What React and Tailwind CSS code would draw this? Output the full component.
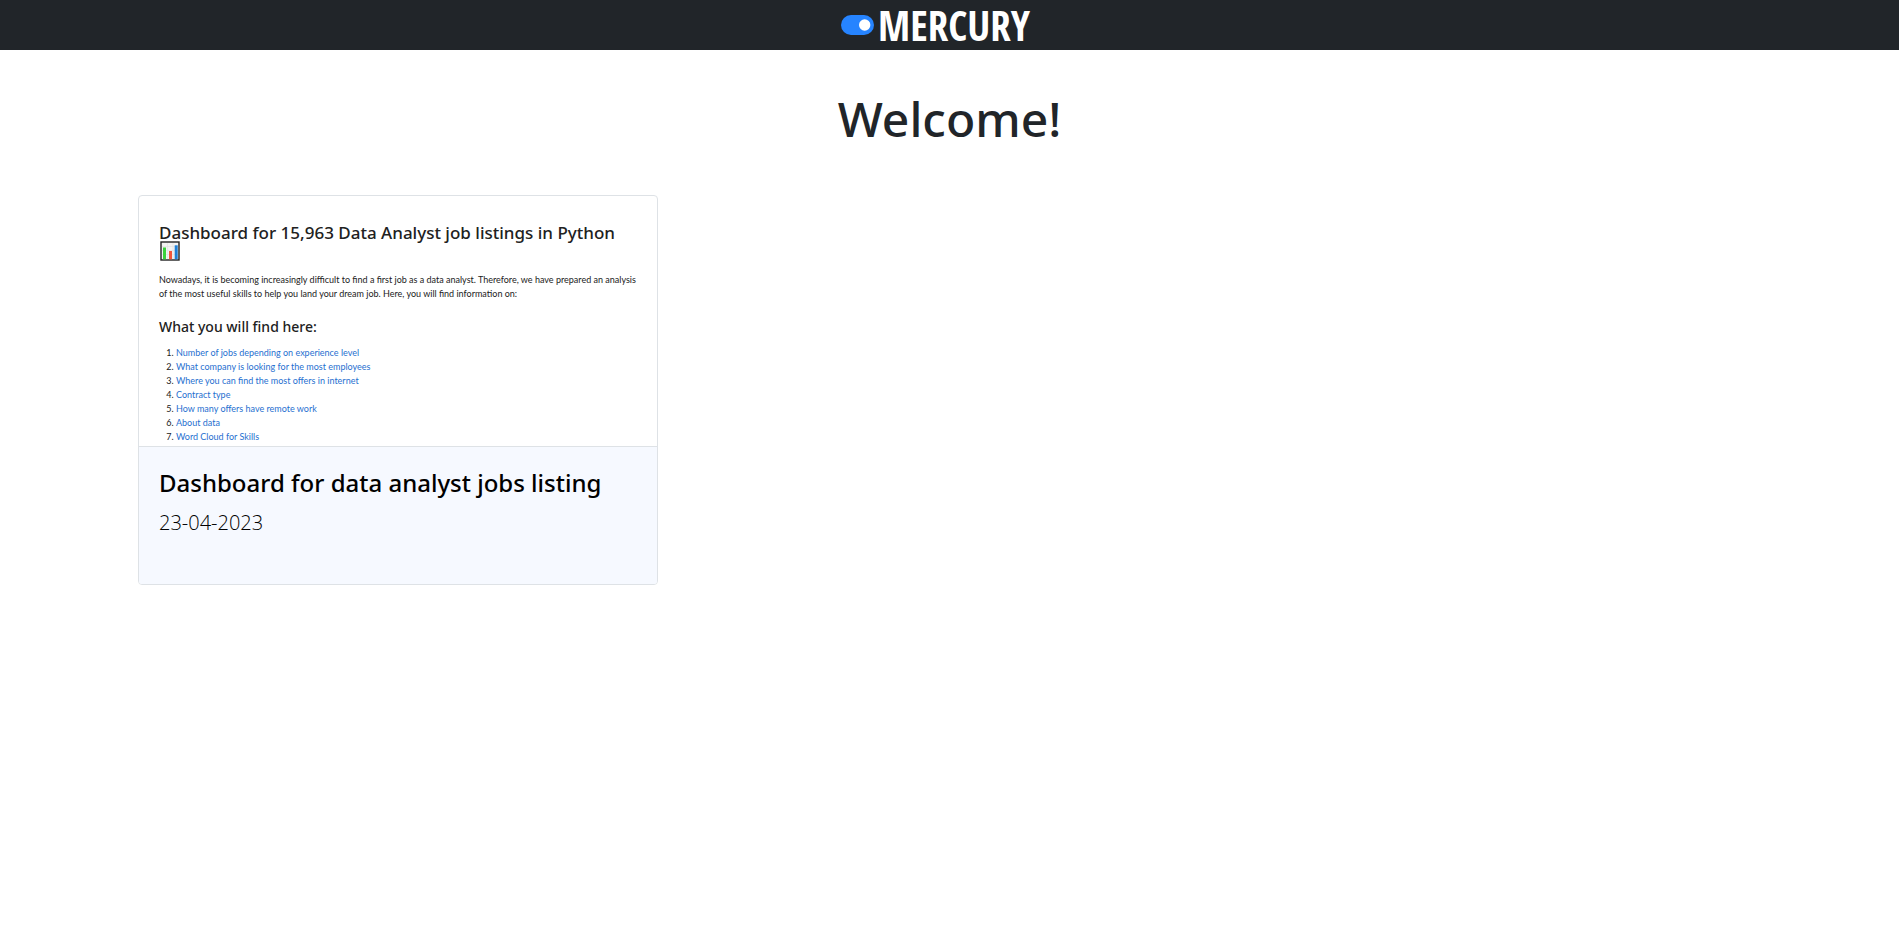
const topics = [
  'Number of jobs depending on experience level',
  'What company is looking for the most employees',
  'Where you can find the most offers in internet',
  'Contract type',
  'How many offers have remote work',
  'About data',
  'Word Cloud for Skills',
];

function Logo() {
  return (
    <a href="#home" className="flex items-center gap-1 text-white">
      <svg viewBox="0 0 33 20" className="h-5 w-[33px]" aria-hidden="true">
        <rect width="33" height="20" rx="10" fill="#2684ff" />
        <circle cx="23.7" cy="10" r="5.7" fill="#fff" />
      </svg>
      <span className="font-['Open_Sans_Condensed','Roboto_Condensed','Noto_Sans_Condensed','Lato',sans-serif] text-[41px] leading-[50px] font-bold">MERCURY</span>
    </a>
  );
}

function ChartIcon() {
  return (
    <svg viewBox="0 0 20 20" className="ml-px h-5 w-5" role="img" aria-label="Bar chart">
      <rect x="1" y="1" width="18" height="18" fill="#f3f3f3" stroke="#222" strokeWidth="1.4" />
      <path d="M2 5.500h16M2 9.500h16M2 13.500h16M7.500 2v16M13 2v16" stroke="#e0e0e0" strokeWidth="0.6" />
      <rect x="3" y="6.500" width="3" height="11.800" fill="#3bd13b" />
      <rect x="9" y="10" width="3" height="8.300" fill="#f4553a" />
      <rect x="14.700" y="4.300" width="3" height="14" fill="#1e80d8" />
    </svg>
  );
}

function NotebookPreview() {
  return (
    <div className="pt-7 pr-5 pb-0.5 pl-5 font-['Lato',sans-serif] text-[9px] leading-[14px] text-[#212121]">
      <h3 className="font-['Noto_Sans',sans-serif] text-[17px] leading-[17px] font-medium">Dashboard for 15,963 Data Analyst job listings in Python</h3>
      <ChartIcon />
      <p className="mt-3">
        Nowadays, it is becoming increasingly difficult to find a first job as a data analyst. Therefore, we have prepared an analysis of the most useful skills to help you land your dream job. Here, you will find information on:
      </p>
      <h4 className="mt-4 font-['Noto_Sans',sans-serif] text-[14px] leading-[20px] font-medium">What you will find here:</h4>
      <ol className="mt-[9px] list-decimal pl-[17px]">
        {topics.map((topic) => (
          <li key={topic}>
            <a href="#topic" className="text-[#1f6fd0]">{topic}</a>
          </li>
        ))}
      </ol>
    </div>
  );
}

export default function App() {
  return (
    <div className="min-h-screen bg-white font-['Noto_Sans',sans-serif] text-[#212529]">
      <header className="flex h-[50px] items-center justify-center bg-[#212529] pr-7">
        <Logo />
      </header>
      <main className="px-[138px]">
        <h1 className="pt-[35px] text-center text-[48px] leading-[68px] font-medium">Welcome!</h1>
        <div className="mt-[42px] grid grid-cols-3 gap-8">
          <article className="overflow-hidden rounded border border-[#dee2e6]">
            <NotebookPreview />
            <div className="h-[138px] border-t border-[#dee2e6] bg-[#f6f9ff] px-5 pt-5 text-black">
              <h2 className="text-[24px] leading-[32px] font-medium">
                <a href="#dashboard">Dashboard for data analyst jobs listing</a>
              </h2>
              <p className="mt-2 font-['Open_Sans',sans-serif] text-[20px] leading-[32px] font-light">23-04-2023</p>
            </div>
          </article>
        </div>
      </main>
    </div>
  );
}
